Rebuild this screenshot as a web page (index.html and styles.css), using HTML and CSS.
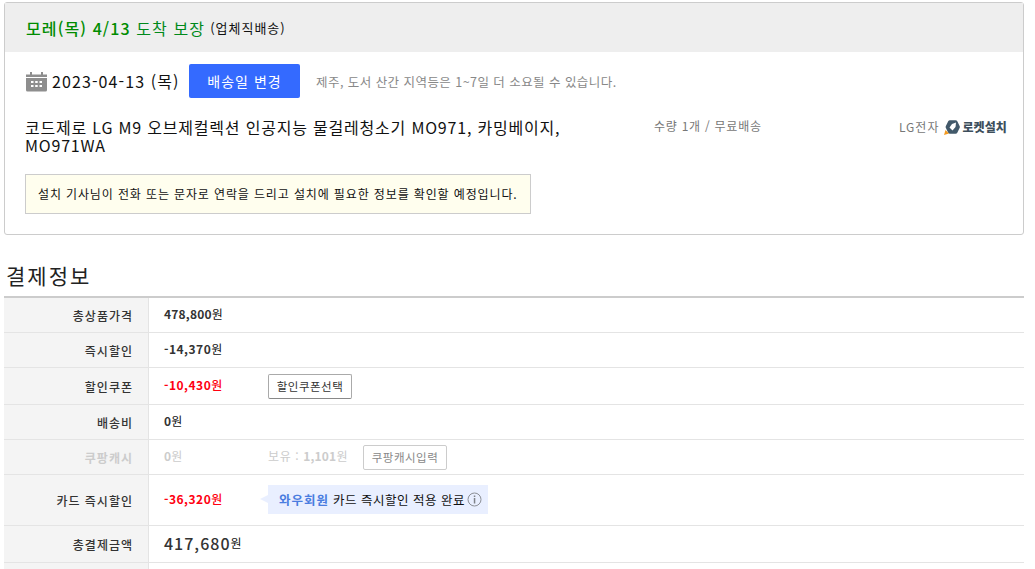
FILE: index.html
```html
<!DOCTYPE html>
<html lang="ko">
<head>
<meta charset="utf-8">
<title>결제정보</title>
<link rel="stylesheet" href="styles.css">
</head>
<body>
<div class="page">
  <section class="card">
    <h2 class="card-head"><span class="guarantee"><span class="dark-green">모레(목) 4/13</span> 도착 보장</span> <span class="vendor">(업체직배송)</span></h2>
    <div class="card-body">
      <div class="date-row">
        <svg class="cal" width="21" height="21" viewBox="0 0 21 21" aria-hidden="true">
          <path fill="#8e8e8e" d="M0 3.500h4V1h2v2.500h9V1h2v2.500h4V6H0zM0 7h21v12a1.500 1.500 0 0 1-1.500 1.500h-18A1.500 1.500 0 0 1 0 19z"/>
          <path fill="#fff" d="M5 10h2.500v2H5zM9.200 10h2.500v2H9.200zM13.500 10H16v2h-2.500zM5 14h2.500v2H5zM9.200 14h2.500v2H9.200zM13.500 14H16v2h-2.500z"/>
        </svg>
        <span class="date">2023-04-13 (목)</span>
        <button class="change-btn">배송일 변경</button>
        <span class="date-note">제주, 도서 산간 지역등은 1~7일 더 소요될 수 있습니다.</span>
      </div>
      <div class="product-row">
        <div class="product-name">코드제로 LG M9 오브제컬렉션 인공지능 물걸레청소기 MO971, 카밍베이지, MO971WA</div>
        <div class="qty">수량 1개 / 무료배송</div>
        <div class="seller">
          <span class="brand">LG전자</span>
          <svg width="17" height="17" viewBox="0 0 17 17" aria-hidden="true">
            <path fill="#42596a" d="M7 1.200h5.500a2 2 0 0 1 1.800 1L16.600 7a2 2 0 0 1 0 2l-2.300 4.800a2 2 0 0 1-1.800 1H7a2 2 0 0 1-1.800-1L2.900 9a2 2 0 0 1 0-2l2.300-4.800a2 2 0 0 1 1.800-1z"/>
            <path fill="#fff" d="M13 3.500 12.500 8 9.500 11.500 6.500 8.500 9 5z"/>
            <path fill="#f39a1f" d="M1 16l1.500-5 3.500 3.500z"/>
          </svg>
          <b class="rocket">로켓설치</b>
        </div>
      </div>
      <div class="notice">설치 기사님이 전화 또는 문자로 연락을 드리고 설치에 필요한 정보를 확인할 예정입니다.</div>
    </div>
  </section>

  <h2 class="pay-title">결제정보</h2>
  <div class="pay-table">
    <div class="row h35"><div class="label">총상품가격</div><div class="value"><b class="amount">478,800</b>원</div></div>
    <div class="row h35"><div class="label">즉시할인</div><div class="value"><b class="amount neg">-14,370</b>원</div></div>
    <div class="row h37"><div class="label">할인쿠폰</div><div class="value"><span class="fixed red"><b class="amount neg">-10,430</b>원</span><button class="small-btn">할인쿠폰선택</button></div></div>
    <div class="row h35"><div class="label">배송비</div><div class="value"><b class="amount">0</b>원</div></div>
    <div class="row h35 muted"><div class="label">쿠팡캐시</div><div class="value"><span class="fixed"><b class="amount">0</b>원</span><span class="hold">보유 : <b class="amount">1,101</b>원</span><button class="small-btn cash-btn">쿠팡캐시입력</button></div></div>
    <div class="row h51"><div class="label">카드 즉시할인</div><div class="value"><span class="fixed red"><b class="amount neg">-36,320</b>원</span>
      <span class="tip"><b class="wow">와우회원</b> 카드 즉시할인 적용 완료<svg class="info" width="15" height="15" viewBox="0 0 15 15" aria-hidden="true"><circle cx="7.500" cy="7.500" r="6.500" fill="none" stroke="#8c8f96"/><path fill="#7f8288" d="M6.800 3.500h1.500v1.500H6.800zM6.800 6h1.500v5.500H6.800z"/></svg></span>
    </div></div>
    <div class="row h37"><div class="label">총결제금액</div><div class="value"><b class="total">417,680</b>원</div></div>
    <div class="row h37"><div class="label"></div><div class="value"></div></div>
  </div>
</div>
</body>
</html>
```
FILE: styles.css
```css
* { box-sizing: border-box; }
html, body { margin: 0; height: 569px; overflow: hidden; background: #fff; }
body { font-family: "Noto Sans CJK KR", "Noto Sans", sans-serif; color: #111; font-size: 12px; }
.page { padding: 2px 11px 0 4px; }
h2 { margin: 0; font-weight: 400; }

.card { border: 1px solid #ccc; border-radius: 3px; height: 233px; }
.card-head { height: 49px; background: #eee; padding-left: 21px; display: flex; align-items: center; gap: 5px; font-size: 12px; }
.guarantee { color: #00891a; font-size: 16px; line-height: 46px; letter-spacing: 1.1px; }
.dark-green { color: #008c00; font-weight: 500; }
.vendor { font-size: 13px; color: #111; letter-spacing: 1px; }

.card-body { padding: 12px 16px 0 21px; }
.date-row { display: flex; align-items: center; height: 34px; }
.cal { margin-right: 5px; flex: none; }
.date { font-size: 16px; color: #111; width: 137px; white-space: nowrap; letter-spacing: 1.1px; }
.change-btn { width: 111px; height: 34px; border: 0; border-radius: 2px; background: #346aff; color: #fff; font: inherit; font-size: 14px; padding: 0; letter-spacing: 1px; }
.date-note { margin-left: 16px; font-size: 12.500px; color: #888; letter-spacing: .45px; }

.product-row { display: flex; margin-top: 20px; align-items: flex-start; }
.product-name { width: 629px; flex: none; margin-left: -1px; padding-right: 72px; font-size: 16px; line-height: 18px; color: #111; letter-spacing: .8px; }
.qty { width: 220px; flex: none; margin-top: -1px; color: #777; font-size: 12px; line-height: 18px; letter-spacing: .75px; }
.seller { flex: 1; display: flex; justify-content: flex-end; align-items: center; gap: 4px; color: #777; font-size: 12px; line-height: 18px; }
.brand { letter-spacing: 1px; }
.rocket { color: #3d4f5c; font-weight: 900; font-size: 12px; margin-left: -2px; letter-spacing: .1px; }

.notice { margin-top: 20px; margin-left: -1px; width: 506px; height: 40px; border: 1px solid #ccc; background: #fffeee; padding-left: 12px; font-size: 12px; line-height: 37px; color: #111; letter-spacing: .87px; white-space: nowrap; }

.pay-title { margin-top: 25px; height: 36px; font-size: 21px; line-height: 30px; color: #222; padding-left: 2px; letter-spacing: 2px; }
.pay-table { border-top: 2px solid #ccc; }
.row { display: flex; border-bottom: 1px solid #e4e4e4; font-size: 12px; }
.h35 { height: 35px; }
.h37 { height: 37px; }
.h51 { height: 51px; }
.label { width: 145px; flex: none; background: #f4f4f4; border-right: 1px solid #e4e4e4; display: flex; align-items: center; justify-content: flex-end; padding-right: 15px; font-weight: 500; color: #333; letter-spacing: 1px; }
.value { flex: 1; display: flex; align-items: center; padding: 0 0 3px 15px; color: #111; }
.amount { font-weight: 700; color: #333; letter-spacing: .2px; }
.neg { letter-spacing: .5px; }
.fixed { width: 104px; flex: none; }
.red, .red .amount { color: #f01; font-weight: 500; }
.red .amount { font-weight: 700; }
.small-btn { width: 84px; height: 25px; margin-top: 3px; border: 1px solid #aaa; border-bottom-color: #888; border-radius: 2px; background: #fff; color: #333; font: inherit; font-size: 11.500px; padding: 0; letter-spacing: .5px; }
.muted .label, .muted .value, .muted .amount { color: #ccc; }
.muted .label { font-weight: 700; }
.hold { width: 95px; flex: none; letter-spacing: .6px; }
.muted .cash-btn { border-color: #ccc; color: #888; }
.tip { position: relative; top: 1px; display: flex; align-items: center; height: 29px; width: 220px; flex: none; background: #e9efff; padding-left: 11px; font-size: 12.500px; white-space: pre; letter-spacing: .5px; }
.tip::before { content: ""; position: absolute; left: -8px; top: 10px; border: 4.500px solid transparent; border-left: 0; border-right: 8px solid #e9efff; }
.wow { color: #4a7de0; font-weight: 700; letter-spacing: 1px; }
.info { margin-left: 2px; flex: none; }
.total { font-size: 16px; font-weight: 500; color: #333; letter-spacing: 1px; }
```
